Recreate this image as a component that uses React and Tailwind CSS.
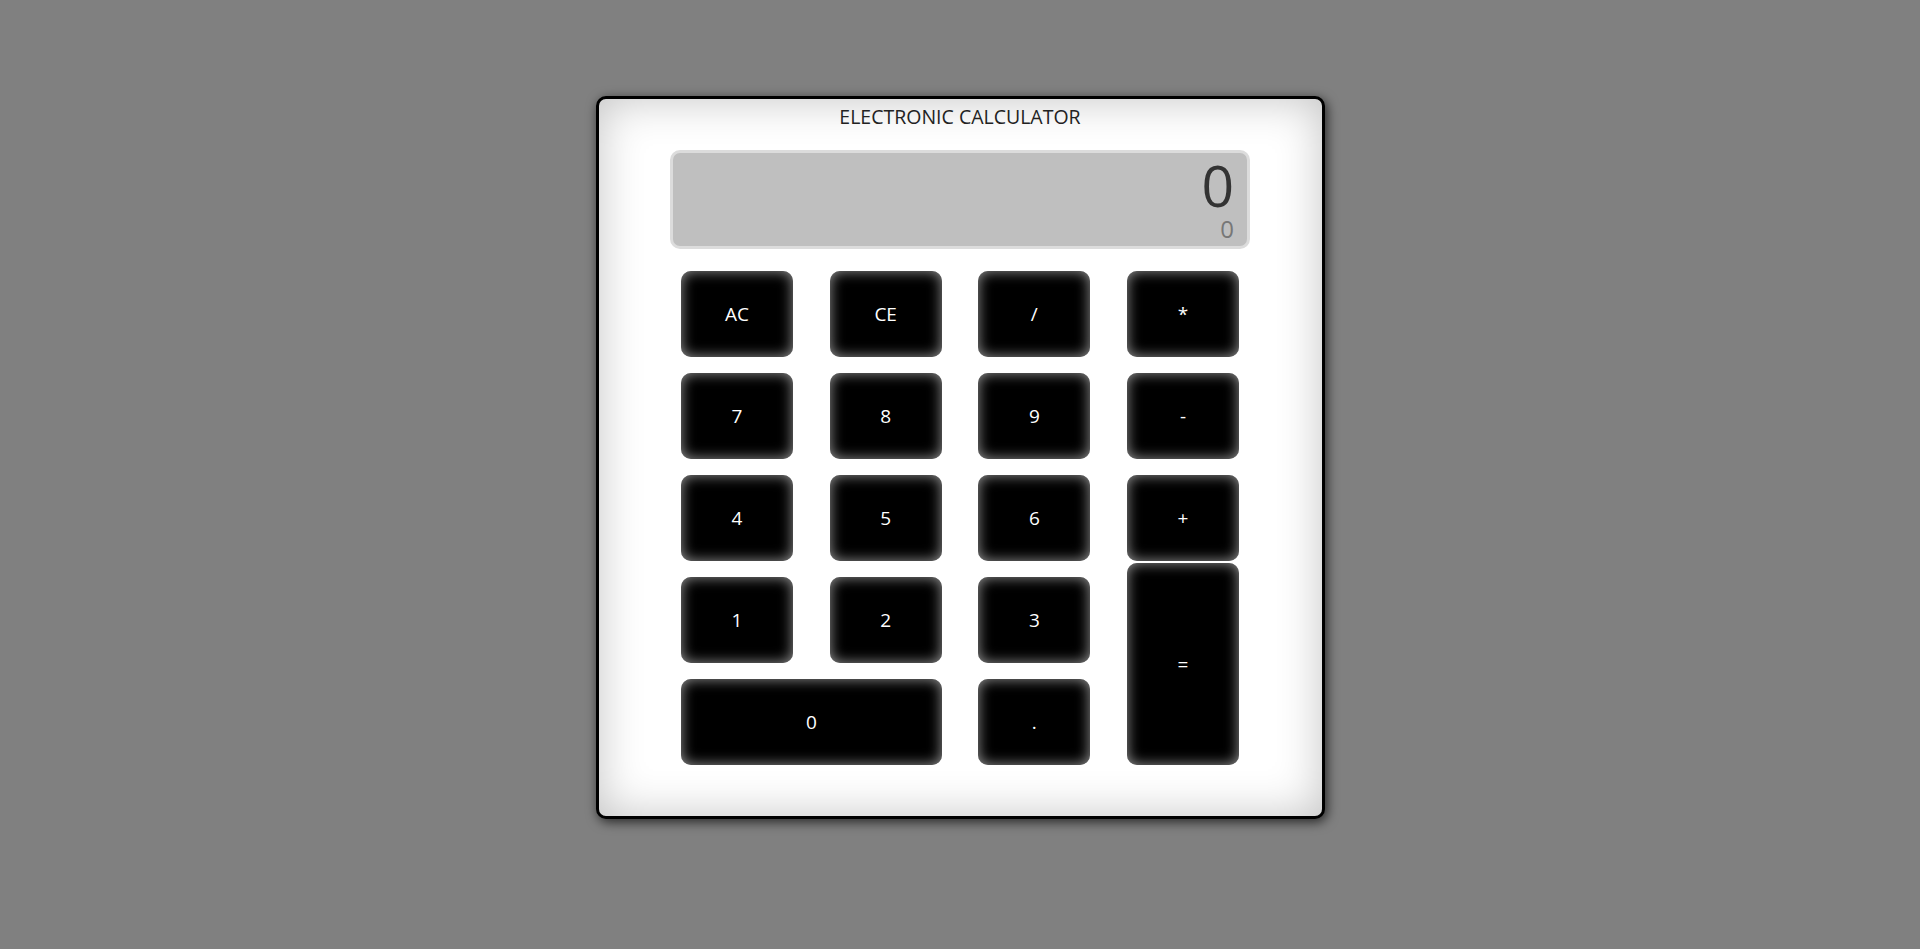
import React, { useState } from 'react';

const keys = [
  { label: 'AC' },
  { label: 'CE' },
  { label: '/' },
  { label: '*' },
  { label: '7' },
  { label: '8' },
  { label: '9' },
  { label: '-' },
  { label: '4' },
  { label: '5' },
  { label: '6' },
  { label: '+' },
  { label: '1' },
  { label: '2' },
  { label: '3' },
  { label: '=', cls: 'row-span-2 -mt-[14px]' },
  { label: '0', cls: 'col-span-2' },
  { label: '.' },
];

const App = () => {
  const [current] = useState('0');
  const [formula] = useState('0');

  return (
    <div
      className="min-h-screen w-full bg-[#808080] flex justify-center pt-[96px]"
      style={{ fontFamily: '"Open Sans", "Noto Sans", sans-serif' }}
    >
      <div className="w-[729px] h-[723px] border-[3px] border-black rounded-[10px] bg-white shadow-[2px_3px_12px_rgba(0,0,0,0.7),inset_0_0_45px_rgba(0,0,0,0.24)] flex flex-col items-center">
        {/* title */}
        <div className="mt-[5px] text-[19.5px] leading-[26px] text-[#222]">ELECTRONIC CALCULATOR</div>

        {/* display */}
        <div className="mt-[20px] w-[580px] h-[99px] bg-[#bfbfbf] border-[3px] border-[#dcdcdc] rounded-[10px] flex flex-col items-end pr-[13px]">
          <div className="text-[57px] leading-[48px] text-[#333] mt-[8px]">{current}</div>
          <div className="text-[24px] leading-[20px] text-[#777] mt-[10px]">{formula}</div>
        </div>

        {/* keypad */}
        <div className="mt-[22px] w-[558px] grid grid-cols-[112px_112px_112px_112px] justify-between grid-rows-[repeat(5,86px)] gap-y-4">
          {keys.map(k => (
            <button
              key={k.label}
              className={`bg-black text-white text-[19px] rounded-[10px] shadow-[inset_0_0_14px_rgba(255,255,255,0.6)] flex items-center justify-center ${k.cls || ''}`}
            >
              {k.label}
            </button>
          ))}
        </div>
      </div>
    </div>
  );
};

export default App;
